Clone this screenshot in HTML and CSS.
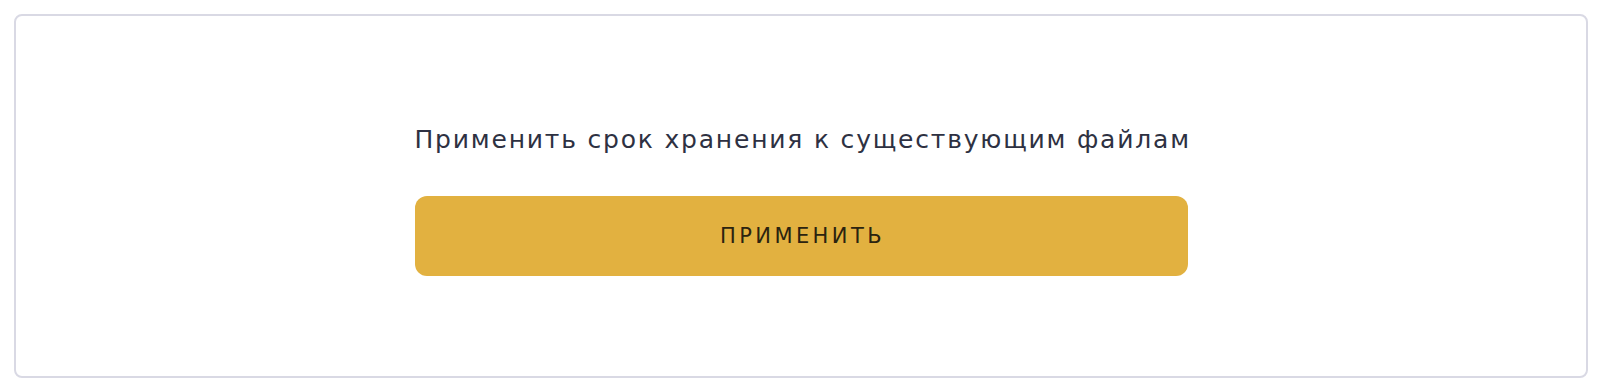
FILE: index.html
```html
<!DOCTYPE html>
<html lang="ru">
<head>
<meta charset="utf-8">
<title>Срок хранения</title>
<link rel="stylesheet" href="styles.css">
</head>
<body>
<div class="page">
  <section class="card">
    <div class="stack">
      <p class="label">Применить срок хранения к существующим файлам</p>
      <button class="apply-btn" type="button">ПРИМЕНИТЬ</button>
    </div>
  </section>
</div>
</body>
</html>
```

FILE: styles.css
```css
* { box-sizing: border-box; }
html, body { margin: 0; padding: 0; background: #ffffff; }
body { font-family: "DejaVu Sans", "Noto Sans", sans-serif; }
.page { padding: 14px 14px 0; }
.card {
  height: 364px;
  border: 2px solid #d9d9e4;
  border-radius: 8px;
  background: #ffffff;
  padding-top: 108px;
}
.stack {
  width: 773px;
  margin: 0 auto;
  display: flex;
  flex-direction: column;
  align-items: stretch;
}
.label {
  margin: 0;
  font-size: 25px;
  line-height: 32px;
  color: #2e3142;
  text-align: center;
  white-space: nowrap;
  letter-spacing: 1.8px;
}
.apply-btn {
  margin-top: 40px;
  height: 80px;
  border: none;
  border-radius: 12px;
  background: #e2b140;
  color: #2b230f;
  font-family: "DejaVu Sans", "Noto Sans", sans-serif;
  font-size: 21px;
  letter-spacing: 3.4px;
  display: flex;
  align-items: center;
  justify-content: center;
  padding: 0 0 0 3px;
}
```
